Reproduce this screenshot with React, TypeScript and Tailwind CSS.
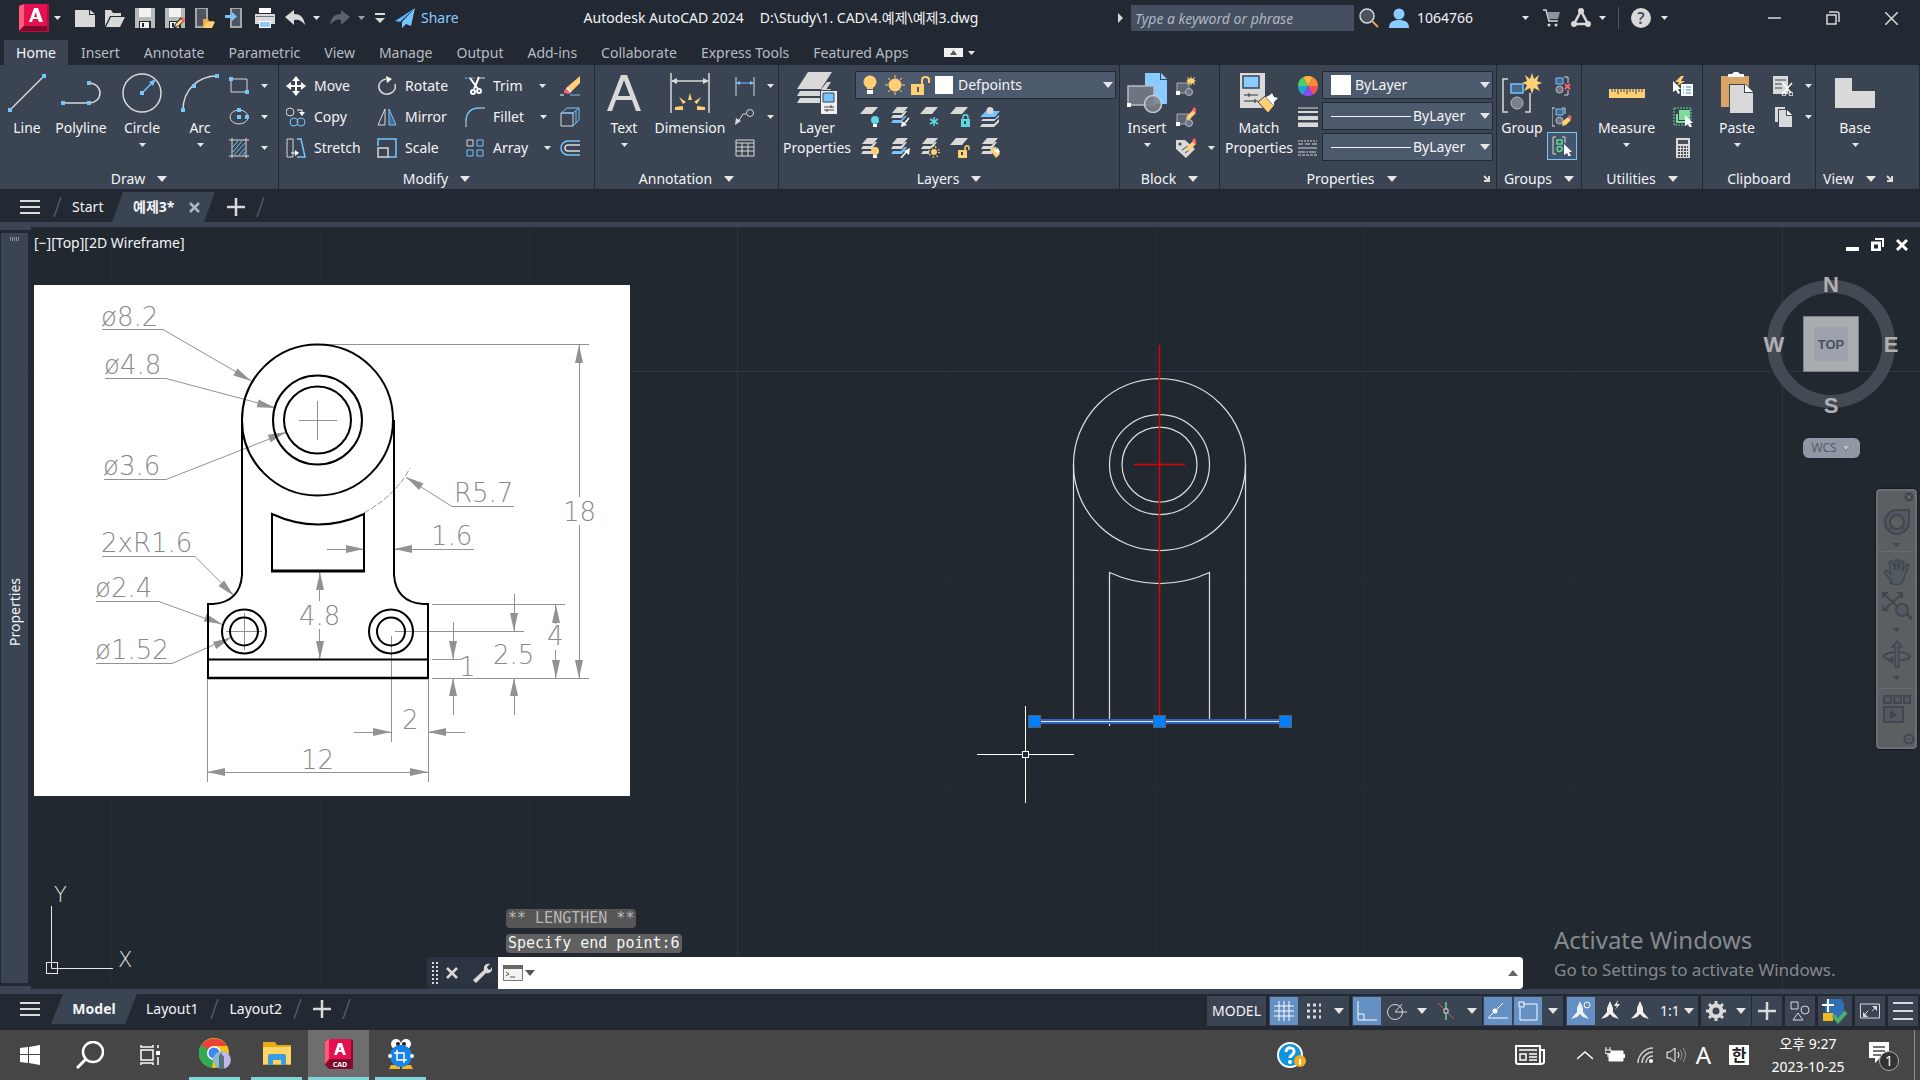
import type { ReactNode } from "react";

const L = "#d9d9d9";
const B = "#75c5ff";
const Y = "#ffd073";
const R = "#ff6369";

function Svg({ w = 20, h = 20, box, children }: { w?: number; h?: number; box?: string; children: ReactNode }) {
  return (
    <svg width={w} height={h} viewBox={box ?? `0 0 ${w} ${h}`} fill="none" className="shrink-0" aria-hidden="true">
      {children}
    </svg>
  );
}

function Caret({ big = false, color = "#e6e6e6" }: { big?: boolean; color?: string }) {
  return big ? (
    <Svg w={10} h={6}><path d="M0 0h10L5 6z" fill={color} /></Svg>
  ) : (
    <Svg w={7} h={4}><path d="M0 0h7L3.500 4z" fill={color} /></Svg>
  );
}

const Dot = ({ x, y, c = B }: { x: number; y: number; c?: string }) => (
  <rect x={x - 2} y={y - 2} width="4" height="4" fill={c} />
);

/* ---------- shared glyph fragments ---------- */

const Sheet = ({ y = 0, c = L }: { y?: number; c?: string }) => (
  <path d={`M6 ${y}h12l-6 7H0z`} fill={c} />
);
const Sheets = ({ mid = L, low = L }: { mid?: string; low?: string }) => (
  <>
    <path d="M7 0h11l-5 6H2z" fill={L} />
    <path d="M15 4h2l-5 7H1l2-3h8z" fill={mid} />
    <path d="M15 9h2l-5 7H1l2-3h8z" fill={low} />
  </>
);
const BulbShape = ({ c }: { c: string }) => (
  <>
    <circle cx="15" cy="13" r="4" fill={c} />
    <path d="M13 17h4v3h-4z" fill="#fff" />
  </>
);
const Pencil = () => (
  <>
    <path d="M11 9l6-6 3 3-6 6-4 1z" fill={Y} />
    <path d="M16 3l2-3 3 3-2 3z" fill={R} />
  </>
);
const Cursor = ({ x = 0, y = 0 }: { x?: number; y?: number }) => (
  <path transform={`translate(${x} ${y})`} d="M0 0v11l3-2 2 4 2-1-2-4h3z" fill="#fff" />
);

/* ---------- title bar icons ---------- */

const NewIcon = () => (
  <Svg><path d="M0 2h14v5h6v12H0z" fill={L} /><path d="M15 2l5 4h-5z" fill={L} /></Svg>
);
const OpenIcon = () => (
  <Svg><path d="M0 18V2h6l2 3h8v3H5z" fill={L} /><path d="M6 9h14l-5 10H1z" fill={L} /></Svg>
);
const SaveIcon = ({ pencil = false }: { pencil?: boolean }) => (
  <Svg>
    <path d="M0 0h20v20H0z" fill="#b8b8b8" />
    <path d="M4 0h12v9H4z" fill="#f2f2f2" />
    <path d="M4 13h12v7H4z" fill="#222933" />
    <path d="M5 14h9v6H5z" fill="#f2f2f2" />
    <path d="M7 15h2v4H7z" fill="#222933" />
    {pencil && <g transform="translate(1 8)"><path d="M9 8l-2 5 5-2 6-6-3-4z" fill="#222933" /><path d="M10 8l-1 3 3-1 5-5-2-2z" fill={Y} /><path d="M15 3l2-2 3 2-2 3z" fill={R} /></g>}
  </Svg>
);
const CloudOpenIcon = () => (
  <Svg>
    <path d="M1 0h11v19H1z" fill="#4d5560" stroke="#a6a6a6" strokeWidth="2" />
    <path d="M8 11h5l1 2h5v3h-8l-2 4H8z" fill="#f5a93b" /><path d="M11 14h9l-3 6H9z" fill={Y} />
  </Svg>
);
const CloudSaveIcon = () => (
  <Svg>
    <path d="M6 0h10v19H6z" fill="#4d5560" stroke="#a6a6a6" strokeWidth="2" />
    <path d="M0 7h7V4l5 4.500-5 4.500v-3H0z" fill={B} />
  </Svg>
);
const PrintIcon = () => (
  <Svg>
    <path d="M4 0h12v5H4z" fill="#fff" /><path d="M0 6h20v10H0z" fill={L} /><path d="M1 8h18v1H1z" fill="#6b7280" /><path d="M4 13h12v7H4z" fill="#fff" /><path d="M5 14h10v5H5z" fill="#8ccbff" />
  </Svg>
);
const UndoIcon = ({ redo = false }: { redo?: boolean }) => (
  <Svg>
    <path transform={redo ? "matrix(-1 0 0 1 20 0)" : undefined} d="M0 9l9-7v4c6 0 10 3 11 11-3-4-6-6-11-5v5z" fill={redo ? "#5d636c" : L} />
  </Svg>
);
const ShareIcon = () => (
  <Svg><path d="M20 0L0 13l5 1z" fill="#5fb5ff" /><path d="M20 0L7 14v6l4-4 5 2z" fill="#75c5ff" /></Svg>
);

/* ---------- ribbon icons ---------- */

const LineIcon = () => (
  <Svg w={40} h={40}><path d="M3 37L37 3" stroke={L} strokeWidth="1.500" /><Dot x={3} y={37} /><Dot x={37} y={3} /></Svg>
);
const PolylineIcon = () => (
  <Svg w={40} h={40}><path d="M2 30h26c6 0 11-4 11-10s-5-10-11-10" stroke={L} strokeWidth="1.500" /><Dot x={2} y={30} /><Dot x={28} y={30} /><Dot x={28} y={10} /></Svg>
);
const CircleIcon = () => (
  <Svg w={40} h={40}>
    <circle cx="20" cy="20" r="19" stroke={L} strokeWidth="1.500" />
    <path d="M20 20L31 9" stroke={B} strokeWidth="1.500" /><path d="M34 6l-7 3 4 4z" fill={B} /><Dot x={20} y={20} />
  </Svg>
);
const ArcIcon = () => (
  <Svg w={40} h={40}><path d="M3 37C3 17 18 3 37 3" stroke={L} strokeWidth="1.500" /><Dot x={3} y={37} /><Dot x={14} y={13} /><Dot x={37} y={3} /></Svg>
);
const RectIcon = () => (
  <Svg><path d="M2 3h16v13H2z" stroke={L} /><Dot x={2} y={3} /><Dot x={18} y={16} /></Svg>
);
const EllipseIcon = () => (
  <Svg><ellipse cx="10" cy="10" rx="9" ry="7" stroke={L} /><Dot x={10} y={3} /><Dot x={10} y={10} /><Dot x={18} y={10} /></Svg>
);
const HatchIcon = () => (
  <Svg><path d="M0 2h20M0 18h20M3 0v20M17 0v20" stroke={L} /><path d="M4 9l5-6M4 14L13 3M5 17L16 5M10 17l6-7M14 17l2-3" stroke={B} /></Svg>
);
const MoveIcon = () => (
  <Svg><path d="M10 1v18M1 10h18" stroke="#fff" strokeWidth="2" /><path d="M10 0l4 5H6zM10 20l4-5H6zM0 10l5-4v8zM20 10l-5-4v8z" fill="#fff" /></Svg>
);
const RotateIcon = () => (
  <Svg><path d="M9 3C4 4 1 8 2 12c1 5 7 8 12 5 4-2 5-5 4-9" stroke={L} strokeWidth="1.500" /><path d="M9 0l6 3-5 4z" fill="#fff" /></Svg>
);
const TrimIcon = () => (
  <Svg>
    <path d="M0 2h10" stroke={B} strokeDasharray="2 1" /><path d="M12 2h8" stroke={L} />
    <path d="M5 2l8 11M14 1L9 13" stroke="#fff" strokeWidth="2" />
    <circle cx="8" cy="16" r="2" stroke="#fff" strokeWidth="2" /><circle cx="14" cy="15" r="2" stroke="#fff" strokeWidth="2" />
  </Svg>
);
const EraserIcon = () => (
  <Svg><path d="M20 0v7l-9 9-5-4z" fill={Y} /><path d="M7 11l5 4-3 3-5-1v-2z" fill={R} /><path d="M7 12l4 4" stroke="#fff" strokeWidth="2" /><path d="M0 19h4" stroke="#fff" /><path d="M10 19h10" stroke={B} /></Svg>
);
const CopyIcon = () => (
  <Svg>
    <circle cx="4" cy="5" r="4" stroke={L} /><circle cx="8" cy="15" r="4" stroke={B} /><circle cx="15" cy="15" r="4" stroke={B} />
    <path d="M11 3h5v3" stroke="#fff" /><path d="M13 5h6l-3 4z" fill="#fff" />
  </Svg>
);
const MirrorIcon = () => (
  <Svg><path d="M8 2v16H1z" stroke={L} /><path d="M12 2v16h7z" stroke={B} fill="#47688a" /></Svg>
);
const FilletIcon = () => (
  <Svg><path d="M1 20v-6" stroke={L} /><path d="M14 1h6" stroke={L} /><path d="M1 14C1 6 6 1 14 1" stroke={B} strokeWidth="1.500" /></Svg>
);
const BoxIcon = () => (
  <Svg><path d="M1 6h12v13H1z" stroke={L} /><path d="M1 6l6-5h12l-6 5zM19 1v12l-6 6M16 4v12" stroke={B} /></Svg>
);
const StretchIcon = () => (
  <Svg><path d="M1 1h6v18H1z" stroke={L} /><path d="M11 1h4l4 18h-8" stroke={B} strokeWidth="1.500" /><path d="M5 15h5" stroke="#fff" /><path d="M9 12l4 3-4 3z" fill="#fff" /></Svg>
);
const ScaleIcon = () => (
  <Svg><path d="M1 8V1h18v18h-8" stroke={B} strokeWidth="1.500" /><path d="M1 10h10v9H1z" stroke={L} strokeWidth="1.500" /></Svg>
);
const ArrayIcon = () => (
  <Svg><path d="M2 2h6v6H2z" stroke={L} /><path d="M12 2h6v6h-6zM2 12h6v6H2zM12 12h6v6h-6z" stroke={B} /></Svg>
);
const OffsetIcon = () => (
  <Svg><path d="M20 7H8a3 3 0 0 0 0 6h12" stroke={L} strokeWidth="1.500" /><path d="M20 3H8a7 7 0 0 0 0 14h12" stroke={B} strokeWidth="1.500" /></Svg>
);
const TextIcon = () => (
  <Svg w={40} h={40}><path d="M17 2h6l14 36h-5l-4-11H12L8 38H3zm3 5l-6 16h12z" fill={L} /></Svg>
);
const DimensionIcon = () => (
  <Svg w={40} h={40}>
    <path d="M1 0v40M39 0v40" stroke={L} strokeWidth="1.500" /><path d="M2 8h36" stroke={L} strokeWidth="1.500" />
    <path d="M1 8l6-3v6zM39 8l-6-3v6z" fill={L} />
    <path d="M20 20l2 7h-4zM9 24l7 5-3 2zM31 24l-7 5 3 2zM5 34l8-1v4l-8 0zM35 34l-8-1v4h8z" fill={Y} />
  </Svg>
);
const LinearIcon = () => (
  <Svg><path d="M1 1v19M19 1v19" stroke={L} /><path d="M2 7h16" stroke={B} /><path d="M1 7l4-2v4zM19 7l-4-2v4z" fill={B} /></Svg>
);
const LeaderIcon = () => (
  <Svg><circle cx="15" cy="6" r="3.500" stroke={L} /><path d="M11 7H8l-5 8" stroke={L} /><path d="M0 18l1-7 5 3z" fill={L} /></Svg>
);
const TableIcon = () => (
  <Svg><path d="M1 2h18v16H1z" stroke={L} /><path d="M1 5h18M1 9h18M1 13h18M7 5v13M13 5v13" stroke={L} /></Svg>
);
const LayerPropsIcon = () => (
  <Svg w={40} h={42}>
    <path d="M11 0h24l-11 17H0z" fill={L} /><path d="M30 10h4l-9 14H0l3-5h20zM30 17h4l-9 14H0l3-5h20z" fill={L} />
    <path d="M23 18h17v24H23z" fill="#3b4453" /><path d="M24 19h16v23H24z" fill="#f0f0f0" /><path d="M26 21h11v9H26z" fill={B} stroke="#3b4453" /><path d="M27 35h10M27 38h10M34 33v3M30 37v3" stroke="#444" />
  </Svg>
);
const BulbIcon = () => (
  <Svg><circle cx="10" cy="7" r="6.500" fill={Y} /><path d="M7 12h6v2H7z" fill={Y} /><path d="M7 15h6v4H7z" fill="#fff" /></Svg>
);
const SunIcon = () => (
  <Svg><circle cx="10" cy="10" r="6.500" fill={Y} /><path d="M10 0v3M10 17v3M0 10h3M17 10h3M3 3l2 2M15 15l2 2M3 17l2-2M15 5l2-2" stroke={Y} /></Svg>
);
const UnlockIcon = () => (
  <Svg><path d="M1 9h13v11H1z" fill={Y} /><path d="M12 9V5c0-4 7-4 7 0v3" stroke={Y} strokeWidth="2" /><path d="M8 12v5" stroke="#4d5a6e" strokeWidth="2" /></Svg>
);
const LayerTools: ReactNode[] = [
  <Svg key="off"><Sheet /><BulbShape c="#5fd9e0" /></Svg>,
  <Svg key="iso"><Sheets low={B} /><path d="M11 20l1-6 5-5 2 3-4 4z" fill="#3b4453" /><path d="M19 11l-5 6" stroke="#fff" strokeWidth="1.500" /><path d="M11 20l1-6 5 4z" fill="#fff" /></Svg>,
  <Svg key="frz"><Sheet /><path d="M14 10v9M10 12l8 5M18 12l-8 5" stroke="#5fd9e0" strokeWidth="1.500" /></Svg>,
  <Svg key="lock"><Sheet /><path d="M11 12h9v8h-9z" fill="#5fd9e0" /><path d="M13 12v-2c0-3 5-3 5 0v2" stroke="#5fd9e0" strokeWidth="1.500" /><path d="M15 14v3" stroke="#3b4453" strokeWidth="2" /></Svg>,
  <Svg key="cur"><path d="M6 4h14l-5 6H0z" fill={B} /><path d="M3 12h12l4-4v2l-5 4H1zM2 17h12l5-5v3l-5 5H0z" fill={L} /><circle cx="10" cy="3.500" r="3.500" fill={L} /></Svg>,
  <Svg key="on"><Sheets /><BulbShape c={Y} /></Svg>,
  <Svg key="uniso"><Sheets low={B} /><path d="M11 20l6-7" stroke="#fff" strokeWidth="1.500" /><path d="M20 10l-1 7-5-4z" fill="#fff" /></Svg>,
  <Svg key="thaw"><Sheets /><circle cx="14" cy="14" r="5" fill="#3b4453" /><circle cx="14" cy="14" r="3" fill={Y} /><circle cx="14" cy="14" r="5" stroke={Y} strokeWidth="2" strokeDasharray="1 3" /></Svg>,
  <Svg key="unlk"><Sheet /><path d="M8 12h9v8H8z" fill={Y} /><path d="M15 12v-2c0-3 4-3 4 0v2" stroke={Y} strokeWidth="1.500" /><path d="M12 14v3" stroke="#3b4453" strokeWidth="2" /></Svg>,
  <Svg key="mat"><Sheets /><path d="M10 12l4-3 6 7-4 4z" fill={Y} /><path d="M14 12l4-2 2 4-2 2z" fill="#fff" /></Svg>,
];
const InsertIcon = () => (
  <Svg w={40} h={40}>
    <path d="M18 0h15v7h7v24H18z" fill="#8accff" /><path d="M34 0l6 6h-6z" fill="#8accff" />
    <path d="M1 13h26v19H1z" fill="#6d7583" stroke="#b8bcc2" strokeWidth="1.500" /><circle cx="26" cy="31" r="8.500" fill="#7b818c" fillOpacity=".85" stroke="#c8cbd0" strokeWidth="1.500" /><Dot x={2} y={32} c="#fff" />
  </Svg>
);
const BlockBase = () => (
  <><path d="M1 7h12v10H1z" fill="#5e6674" stroke="#a6abb3" /><circle cx="13" cy="16" r="3.500" fill="#6d7583" stroke="#b8bcc2" /><Dot x={2} y={17} c="#fff" /></>
);
const CreateBlockIcon = () => (
  <Svg><BlockBase /><path d="M15 0l1 3 3-2-1 3 2 1-2 1 1 3-3-2-1 3-1-3-3 2 1-3-2-1 2-1-1-3 3 2z" fill={Y} /></Svg>
);
const EditBlockIcon = () => <Svg><BlockBase /><Pencil /></Svg>;
const TagIcon = () => (
  <Svg><path d="M0 2h9l10 9-9 9L0 11z" fill={L} /><circle cx="4" cy="6" r="1.500" fill="#3b4453" /><path d="M6 12l6-4M9 15l4-3" stroke="#3b4453" /><Pencil /></Svg>
);
const MatchIcon = () => (
  <Svg w={40} h={40}>
    <path d="M1 0h25v35H1z" fill={L} /><path d="M4 3h16v12H4z" fill="#8accff" stroke="#3b4453" strokeWidth="1.500" />
    <path d="M5 22h14M5 28h14M10 20v4M16 26v4" stroke="#333" />
    <path d="M19 29l7-6 9 10-6 7z" fill={Y} stroke="#3b4453" /><path d="M27 24l4-2 2-2 2 4 4 1-4 4v4z" fill="#fff" />
  </Svg>
);
const WheelIcon = () => (
  <Svg>
    {["#ffb13c", "#f98a3c", "#ea5455", "#8a4bf2", "#22a5c8", "#4dcf6a"].map((c, i) => (
      <path key={c} d="M10 10L5 1.340A10 10 0 0 1 15 1.340z" fill={c} transform={`rotate(${i * 60} 10 10)`} />
    ))}
  </Svg>
);
const WeightIcon = () => (
  <Svg><path d="M0 1h20" stroke={L} /><path d="M0 5h20" stroke={L} strokeWidth="2" /><path d="M0 11h20" stroke={L} strokeWidth="4" /><path d="M0 18h20" stroke={L} strokeWidth="5" /></Svg>
);
const LinetypeIcon = () => (
  <Svg><path d="M0 3h19" stroke={L} strokeDasharray="2 1" /><path d="M0 6h19" stroke={L} strokeDasharray="5 2" /><path d="M0 10h19" stroke={L} /><path d="M0 14h19" stroke={L} strokeDasharray="7 1 2 1" /><path d="M0 17h19" stroke={L} strokeDasharray="3 1" /></Svg>
);
const GroupIcon = () => (
  <Svg w={40} h={40}>
    <path d="M6 6H1v33h5M23 39h5V20" stroke={L} strokeWidth="1.500" />
    <path d="M9 11h12v9H9z" fill="#47688a" stroke={B} strokeWidth="1.500" /><circle cx="15" cy="30" r="6" fill="#7b818c" stroke="#b8bcc2" />
    <path d="M30 0l2 6 5-4-2 6 5 2-5 2 3 6-6-3-2 6-2-6-6 3 3-6-5-2 5-2-2-6 5 4z" fill={Y} />
  </Svg>
);
const GroupMini = ({ c = B }: { c?: string }) => (
  <><path d="M4 2h7v6H4z" fill="#47688a" stroke={c} /><circle cx="7.500" cy="13.500" r="3.500" fill="#6d7583" stroke="#b8bcc2" /></>
);
const UngroupIcon = () => (
  <Svg><GroupMini /><path d="M12 1h4v6M12 19h4v-5" stroke={L} /><path d="M13 8l5 5M18 8l-5 5" stroke={R} strokeWidth="2" /></Svg>
);
const GroupEditIcon = () => (
  <Svg><path d="M3 1H0v18h3M10 1h3v6" stroke={L} /><GroupMini /><path d="M10 19l1-5 5-4 3 3-5 5z" fill={Y} /><path d="M16 9l2-1 2 3-2 1z" fill={R} /></Svg>
);
const GroupSelIcon = () => (
  <Svg><path d="M4 1H1v17h3M10 1h3v6" stroke={L} /><path d="M5 4h5v4H5z" stroke="#5fd98c" strokeWidth="1.500" /><circle cx="7.500" cy="13" r="2.500" stroke="#5fd98c" strokeWidth="1.500" /><Cursor x={12} y={8} /></Svg>
);
const RulerIcon = () => (
  <Svg w={40} h={40}><path d="M2 16h36v9H2z" fill={Y} /><path d="M5 16v3M8 16v3M11 16v5M14 16v3M17 16v3M20 16v5M23 16v3M26 16v3M29 16v5M32 16v3M35 16v3" stroke="#3b4453" /></Svg>
);
const QuickSelIcon = () => (
  <Svg><path d="M8 0L2 6h4l-2 4 8-5H8l3-5z" fill={Y} /><Cursor x={0} y={5} /><path d="M8 8h12v12H8z" fill="#fff" /><path d="M10 11h1M10 14h1M10 17h1M13 11h5M13 14h5M13 17h5" stroke="#2f86e0" /></Svg>
);
const SelectAllIcon = () => (
  <Svg><path d="M1 1h17v17H1z" stroke="#5fd98c" strokeDasharray="2 1" /><path d="M6 3h11v10H6z" fill="#7fdc9d" /><path d="M3 7h2v7h8v2H3z" fill="#7fdc9d" /><Cursor x={12} y={8} /></Svg>
);
const CalcIcon = () => (
  <Svg><path d="M3 0h14v20H3z" fill={L} /><path d="M5 2h10v4H5z" fill="#4b4f57" /><path d="M5 9h10M5 12h10M5 15h10M5 18h10" stroke="#4b4f57" strokeWidth="2" strokeDasharray="2 1" /></Svg>
);
const PasteIcon = () => (
  <Svg w={40} h={42}>
    <path d="M4 4h28v31H4z" fill="#d9a566" /><path d="M11 5V2h4l2-2h4l2 2h4v3z" fill="#fff" />
    <path d="M12 12h17l8 8v22H12z" fill="#3b4453" /><path d="M13 13h14v8h9v20H13z" fill={L} /><path d="M28 12l8 8h-8z" fill="#fff" />
  </Svg>
);
const CutIcon = () => (
  <Svg><path d="M0 0h15v18H0z" fill={L} /><path d="M2 4h11M2 8h7M2 12h7" stroke="#3b4453" /><path d="M9 6l9 11M19 7l-9 10" stroke="#fff" strokeWidth="1.500" /><circle cx="11" cy="18" r="2" stroke="#fff" /><circle cx="18" cy="18" r="2" stroke="#fff" /></Svg>
);
const CopyClipIcon = () => (
  <Svg><path d="M2 0h10v2H5v13H2z" fill={L} /><path d="M6 3h7v6h6v11H6z" fill={L} /><path d="M14 3l5 5h-5z" fill="#fff" /></Svg>
);
const BaseIcon = () => <Svg w={40} h={40}><path d="M0 5h17v13h23v17H0z" fill={L} /></Svg>;

/* ---------- ribbon building blocks ---------- */

function Big({ icon, label, second, caret, w }: { icon: ReactNode; label: string; second?: string; caret?: boolean; w: string }) {
  return (
    <button className={`flex flex-col items-center gap-[5px] pt-2 ${w}`}>
      <span className="flex h-10 items-center">{icon}</span>
      <span className="text-sm leading-5 whitespace-nowrap">{label}{second && <><br />{second}</>}</span>
      {caret && <Caret />}
    </button>
  );
}

function Panel({ title, children, caret = true, launcher, start }: { title: string; children: ReactNode; caret?: boolean; launcher?: boolean; start?: boolean }) {
  return (
    <section className="flex min-w-0 flex-col border-r border-[#232a33]" aria-label={title}>
      <div className="flex flex-1">{children}</div>
      <div className={`flex h-[21px] items-center ${start ? "gap-[10px] pl-[7px]" : ""}`}>
        <button className={`flex items-center justify-center gap-3 text-sm leading-5 ${start ? "" : "flex-1"}`}>
          {title}{caret && <Caret big />}
        </button>
        {launcher && (
          <button aria-label={`${title} settings`} className="mr-[6px]">
            <Svg w={7} h={7}><path d="M1 1l4 4M6 1v5H1" stroke={L} strokeWidth="2" /></Svg>
          </button>
        )}
      </div>
    </section>
  );
}

function Tool({ icon, label, caret, name }: { icon: ReactNode; label?: string; caret?: boolean; name?: string }) {
  return (
    <span className="flex h-[31px] items-center">
      <button className="flex items-center gap-2" aria-label={label ? undefined : name}>
        {icon}{label && <span className="text-sm leading-5">{label}</span>}
      </button>
      {caret && <button className={label ? "px-4" : "pl-3"} aria-label={`${label ?? name} options`}><Caret /></button>}
    </span>
  );
}

function Combo({ before, value, label }: { before: ReactNode; value: string; label: string }) {
  return (
    <div className="flex h-7 items-center border border-[#232a33] bg-[#4d5a6e] pr-[2px]">
      {before}
      <select aria-label={label} className="h-[26px] min-w-0 flex-1 appearance-none bg-transparent text-sm leading-5 text-gray-100 outline-none">
        <option>{value}</option>
      </select>
      <Caret big />
    </div>
  );
}

function Ribbon() {
  return (
    <div className="grid h-[124px] grid-cols-[279fr_316fr_184fr_341fr_100fr_277fr_85fr_121fr_113fr_104fr] bg-[#3b4453]">
      <Panel title="Draw">
        <Big w="w-[54px]" icon={<LineIcon />} label="Line" />
        <Big w="w-[54px]" icon={<PolylineIcon />} label="Polyline" />
        <Big w="w-[68px]" icon={<CircleIcon />} label="Circle" caret />
        <Big w="w-[48px]" icon={<ArcIcon />} label="Arc" caret />
        <div className="pt-[5px] pl-[5px]">
          <Tool icon={<RectIcon />} name="Rectangle" caret />
          <Tool icon={<EllipseIcon />} name="Ellipse" caret />
          <Tool icon={<HatchIcon />} name="Hatch" caret />
        </div>
      </Panel>
      <Panel title="Modify">
        <div className="grid grid-cols-[91px_88px_95px_20px] content-start pt-[5px] pl-[7px]">
          <Tool icon={<MoveIcon />} label="Move" />
          <Tool icon={<RotateIcon />} label="Rotate" />
          <Tool icon={<TrimIcon />} label="Trim" caret />
          <Tool icon={<EraserIcon />} name="Erase" />
          <Tool icon={<CopyIcon />} label="Copy" />
          <Tool icon={<MirrorIcon />} label="Mirror" />
          <Tool icon={<FilletIcon />} label="Fillet" caret />
          <Tool icon={<BoxIcon />} name="Explode" />
          <Tool icon={<StretchIcon />} label="Stretch" />
          <Tool icon={<ScaleIcon />} label="Scale" />
          <Tool icon={<ArrayIcon />} label="Array" caret />
          <Tool icon={<OffsetIcon />} name="Offset" />
        </div>
      </Panel>
      <Panel title="Annotation">
        <Big w="w-[58px]" icon={<TextIcon />} label="Text" caret />
        <Big w="w-[74px]" icon={<DimensionIcon />} label="Dimension" />
        <div className="pt-[5px] pl-2">
          <Tool icon={<LinearIcon />} name="Linear" caret />
          <Tool icon={<LeaderIcon />} name="Leader" caret />
          <Tool icon={<TableIcon />} name="Table" />
        </div>
      </Panel>
      <Panel title="Layers">
        <Big w="w-[76px]" icon={<LayerPropsIcon />} label="Layer" second="Properties" />
        <div className="flex-1 pt-[6px] pr-[3px]">
          <Combo
            label="Layer"
            value="Defpoints"
            before={<span className="flex items-center gap-[5px] pr-[5px] pl-1"><BulbIcon /><SunIcon /><UnlockIcon /><span className="h-[18px] w-[18px] bg-white" /></span>}
          />
          <div className="grid w-[155px] grid-cols-5 pt-[2px] pl-[5px]">
            {LayerTools.map((icon, i) => (
              <button key={i} aria-label={`Layer tool ${i + 1}`} className="flex h-[31px] items-center">{icon}</button>
            ))}
          </div>
        </div>
      </Panel>
      <Panel title="Block">
        <Big w="w-[54px]" icon={<InsertIcon />} label="Insert" caret />
        <div className="pt-[5px] pl-[2px]">
          <Tool icon={<CreateBlockIcon />} name="Create block" />
          <Tool icon={<EditBlockIcon />} name="Edit block" />
          <Tool icon={<TagIcon />} name="Edit attributes" caret />
        </div>
      </Panel>
      <Panel title="Properties" launcher>
        <Big w="w-[78px]" icon={<MatchIcon />} label="Match" second="Properties" />
        <div className="pt-[5px]">
          <Tool icon={<WheelIcon />} name="Color" />
          <Tool icon={<WeightIcon />} name="Lineweight" />
          <Tool icon={<LinetypeIcon />} name="Linetype" />
        </div>
        <div className="flex flex-1 flex-col gap-[3px] pt-[6px] pr-[3px] pl-1">
          <Combo label="Object color" value="ByLayer" before={<span className="mr-1 ml-2 h-5 w-5 bg-white" />} />
          <Combo label="Line weight" value="ByLayer" before={<span className="mr-[2px] ml-2 h-px w-20 bg-gray-100" />} />
          <Combo label="Line type" value="ByLayer" before={<span className="mr-[2px] ml-2 h-px w-20 bg-gray-100" />} />
        </div>
      </Panel>
      <Panel title="Groups">
        <Big w="w-[50px]" icon={<GroupIcon />} label="Group" />
        <div className="flex flex-col items-center pt-[5px]">
          <Tool icon={<UngroupIcon />} name="Ungroup" />
          <Tool icon={<GroupEditIcon />} name="Group edit" />
          <button aria-label="Group selection" className="flex h-7 w-[30px] items-center justify-center border border-[#75c5ff] bg-[#44546b]"><GroupSelIcon /></button>
        </div>
      </Panel>
      <Panel title="Utilities">
        <Big w="w-[89px]" icon={<RulerIcon />} label="Measure" caret />
        <div className="pt-[5px] pl-[2px]">
          <Tool icon={<QuickSelIcon />} name="Quick select" />
          <Tool icon={<SelectAllIcon />} name="Select all" />
          <Tool icon={<CalcIcon />} name="Calculator" />
        </div>
      </Panel>
      <Panel title="Clipboard" caret={false}>
        <Big w="w-[68px]" icon={<PasteIcon />} label="Paste" caret />
        <div className="pt-[5px] pl-[2px]">
          <Tool icon={<CutIcon />} name="Cut" caret />
          <Tool icon={<CopyClipIcon />} name="Copy to clipboard" caret />
        </div>
      </Panel>
      <Panel title="View" launcher start>
        <Big w="w-[78px]" icon={<BaseIcon />} label="Base" caret />
      </Panel>
    </div>
  );
}

/* ---------- title bar ---------- */

function IconButton({ name, children, cls = "" }: { name: string; children: ReactNode; cls?: string }) {
  return <button aria-label={name} className={`flex shrink-0 items-center justify-center ${cls}`}>{children}</button>;
}

function TitleBar() {
  return (
    <header className="flex h-10 items-center pb-1">
      <IconButton name="Application menu" cls="ml-[19px] gap-[5px]">
        <Svg w={30} h={28}>
          <path d="M0 2l5-2h25v28H2l-2-2z" fill="#ba0c3f" /><path d="M5 0h23v22H5z" fill="#e51050" /><path d="M0 2l5-2v22l-5 5z" fill="#ff5c7a" /><path d="M0 27l5-5h23v5z" fill="#7d0a2c" />
          <path d="M15 4h4l5 14h-4l-1-3h-5l-1 3h-3zm2 4l-2 5h3z" fill="#fff" />
        </Svg>
        <Caret />
      </IconButton>
      <nav className="ml-[14px] flex items-center gap-[10px]" aria-label="Quick access">
        <IconButton name="New"><NewIcon /></IconButton>
        <IconButton name="Open"><OpenIcon /></IconButton>
        <IconButton name="Save"><SaveIcon /></IconButton>
        <IconButton name="Save as"><SaveIcon pencil /></IconButton>
        <IconButton name="Open from web"><CloudOpenIcon /></IconButton>
        <IconButton name="Save to web"><CloudSaveIcon /></IconButton>
        <IconButton name="Plot"><PrintIcon /></IconButton>
        <IconButton name="Undo" cls="gap-2"><UndoIcon /><Caret /></IconButton>
        <IconButton name="Redo" cls="gap-2"><UndoIcon redo /><Caret color="#9aa0a8" /></IconButton>
        <IconButton name="Customize toolbar"><Svg w={10} h={10}><path d="M0 1h10" stroke={L} strokeWidth="2" /><path d="M0 5h10L5 10z" fill={L} /></Svg></IconButton>
        <button className="flex items-center gap-[6px] text-sm text-[#8accff]"><ShareIcon />Share</button>
      </nav>
      <h1 className="flex flex-1 justify-start gap-4 pl-[125px] text-sm whitespace-nowrap text-gray-100">
        <span>Autodesk AutoCAD 2024</span><span>D:\Study\1. CAD\4.예제\예제3.dwg</span>
      </h1>
      <div className="flex w-[802px] shrink-0 items-center">
        <Svg w={5} h={10}><path d="M0 0l5 5-5 5z" fill={L} /></Svg>
        <input aria-label="Search" placeholder="Type a keyword or phrase" className="ml-2 h-[26px] w-[223px] bg-[#454f61] px-1 text-sm italic text-gray-100 outline-none placeholder:text-[#b0b6c0]" />
        <IconButton name="Find" cls="ml-[5px]"><Svg><circle cx="8" cy="8" r="7" fill="#4b5260" stroke={L} strokeWidth="1.500" /><path d="M13 13l6 6" stroke="#d9a566" strokeWidth="2" /></Svg></IconButton>
        <button className="ml-[10px] flex items-center gap-2 text-sm text-gray-100">
          <Svg><circle cx="10" cy="6" r="5.500" fill="#8accff" /><path d="M0 20c0-6 4-8 10-8s10 2 10 8z" fill="#8accff" /></Svg>1064766
        </button>
        <IconButton name="Account options" cls="ml-[49px]"><Caret /></IconButton>
        <IconButton name="Cart" cls="ml-[14px]"><Svg w={18} h={18}><path d="M0 1h3l3 11h9" stroke={L} strokeWidth="1.500" /><path d="M4 3h13l-2 7H6z" fill="#8e949c" /><circle cx="6" cy="16" r="1.500" fill={L} /><circle cx="13" cy="16" r="1.500" fill={L} /></Svg></IconButton>
        <IconButton name="Autodesk apps" cls="ml-[10px] gap-2"><Svg><path d="M10 3L3 16h14z" stroke={L} strokeWidth="2.500" /><circle cx="10" cy="3" r="3" fill={L} /><circle cx="3" cy="16" r="3" fill={L} /><circle cx="17" cy="16" r="3" fill={L} /></Svg><Caret /></IconButton>
        <span className="ml-3 h-[22px] w-px bg-[#4d5a6e]" />
        <button aria-label="Help" className="ml-3 flex items-center gap-[10px]"><span className="flex h-5 w-5 items-center justify-center rounded-full bg-[#d9d9d9] text-base leading-5 font-semibold text-[#4b5260]">?</span><Caret /></button>
        <span className="flex flex-1 items-center justify-end gap-[45px] pr-[22px]">
          <IconButton name="Minimize"><Svg w={13} h={13}><path d="M0 6h13" stroke={L} strokeWidth="1.500" /></Svg></IconButton>
          <IconButton name="Restore"><Svg w={14} h={14}><path d="M1 4h9v9H1z" stroke={L} strokeWidth="1.500" /><path d="M3 1h8q2 0 2 2v8" stroke={L} strokeWidth="1.500" /></Svg></IconButton>
          <IconButton name="Close"><Svg w={13} h={13}><path d="M0 0l13 13M13 0L0 13" stroke={L} strokeWidth="1.500" /></Svg></IconButton>
        </span>
      </div>
    </header>
  );
}

const tabs = ["Insert", "Annotate", "Parametric", "View", "Manage", "Output", "Add-ins", "Collaborate", "Express Tools", "Featured Apps"];

function RibbonTabs() {
  return (
    <nav className="flex h-[25px] items-center pl-1 text-sm text-[#b8bcc2]" aria-label="Ribbon tabs">
      <button className="h-[25px] w-16 bg-[#3b4453] text-gray-100">Home</button>
      <div className="ml-[13px] flex gap-6 whitespace-nowrap">
        {tabs.map((t) => <button key={t}>{t}</button>)}
        <button aria-label="Minimize ribbon" className="ml-3 flex items-center gap-[5px]">
          <Svg w={19} h={9}><path d="M0 0h19v9H0z" fill="#f0f0f0" /><path d="M6 7h7L9.500 2z" fill="#555" /></Svg><Caret />
        </button>
      </div>
    </nav>
  );
}

/* ---------- tab strips ---------- */

const MenuIcon = () => <Svg w={20} h={16}><path d="M0 2h20M0 8h20M0 14h20" stroke={L} strokeWidth="2" /></Svg>;
const Slash = () => <Svg w={9} h={20}><path d="M1 20L8 0" stroke="#4d5a6e" strokeWidth="1.500" /></Svg>;
const PlusIcon = () => <Svg w={18} h={18}><path d="M9 0v18M0 9h18" stroke={L} strokeWidth="2.500" /></Svg>;

function FileTabs() {
  return (
    <nav className="flex h-[33px] items-end bg-[#222933] pl-5 text-sm text-gray-100" aria-label="Drawing tabs">
      <span className="flex h-[30px] w-[92px] items-center">
        <button aria-label="Drawing list"><MenuIcon /></button>
        <span className="ml-[13px] flex"><Slash /></span>
        <button className="ml-[10px]">Start</button>
      </span>
      <span className="flex h-[30px] w-[103px] items-center justify-between bg-[#3b4453] pr-[15px] pl-[21px] font-bold [clip-path:polygon(11px_0,100%_0,92px_100%,0_100%)]">
        <button className="whitespace-nowrap">예제3*</button>
        <button aria-label="Close tab"><Svg w={11} h={11}><path d="M1 1l9 9M10 1l-9 9" stroke="#b0b6c0" strokeWidth="2.500" /></Svg></button>
      </span>
      <span className="flex h-[30px] items-center gap-[11px] pl-3"><button aria-label="New tab"><PlusIcon /></button><Slash /></span>
    </nav>
  );
}

/* ---------- drawing area ---------- */

const G = "#929292";
function Arrow({ x, y, a }: { x: number; y: number; a: number }) {
  return <path d="M0 0l-18-4v8z" fill={G} transform={`translate(${x} ${y}) rotate(${a})`} />;
}

const notes: [string, number, number][] = [
  ["ø8.2", 101, 326], ["ø4.8", 104, 374], ["ø3.6", 103, 475], ["2xR1.6", 101, 552], ["ø2.4", 95, 597], ["ø1.52", 95, 659],
  ["R5.7", 454, 502], ["1.6", 431, 545], ["18", 563, 521], ["4.8", 299, 625], ["4", 547, 645], ["2.5", 493, 664], ["1", 459, 676], ["2", 402, 729], ["12", 301, 769],
];

function ReferencePart() {
  return (
    <svg className="absolute top-[58px] left-[3px] bg-white" width="596" height="511" viewBox="34 285 596 511" fill="none" role="img" aria-label="Bracket drawing with dimensions">
      <g stroke={G}>
        <path d="M102 329.500h61l88 51M105 378.500h61l109 29M104 479.500h62l120-47M102 556.500h93l39 39M96 601.500h63l63 23M96 663.500h76l58-26M514 506.500h-62l-46-29" />
        <path d="M364 513q32-18 46-45" strokeDasharray="6 2" />
        <path d="M327 549.500h37M394 549.500h80M318 344.500h271M432 678.500h157M579.500 345v152M579.500 525v153" />
        <path d="M319.500 571v30M319.500 629v30M555.500 604v20M555.500 650v28M432 604.500h133M395 631.500h129M514.500 594v37M514.500 678v37M453.500 622v38M453.500 678v37M432 659.500h30" />
        <path d="M354 732.500h37M428 732.500h37M391.500 636v106M428.500 680v102M207.500 680v102M207 772.500h221" />
        <path d="M299 420.500h38M317.500 401v39M226 631.500h36M244.500 613v37" />
      </g>
      <Arrow x={251} y={381} a={30} /><Arrow x={275} y={408} a={15} /><Arrow x={286} y={432} a={-21} /><Arrow x={234} y={596} a={45} />
      <Arrow x={222} y={624} a={20} /><Arrow x={231} y={638} a={-24} /><Arrow x={406} y={477} a={212} />
      <Arrow x={364} y={549} a={0} /><Arrow x={394} y={549} a={180} /><Arrow x={579} y={345} a={-90} /><Arrow x={579} y={678} a={90} />
      <Arrow x={320} y={572} a={-90} /><Arrow x={320} y={659} a={90} /><Arrow x={556} y={605} a={-90} /><Arrow x={556} y={678} a={90} />
      <Arrow x={514} y={631} a={90} /><Arrow x={514} y={678} a={-90} /><Arrow x={453} y={659} a={90} /><Arrow x={453} y={678} a={-90} />
      <Arrow x={391} y={732} a={0} /><Arrow x={428} y={732} a={180} /><Arrow x={207} y={772} a={180} /><Arrow x={428} y={772} a={0} />
      <g stroke="#000" strokeWidth="2">
        <circle cx="317.500" cy="420" r="75.500" /><circle cx="317.500" cy="420" r="44.500" /><circle cx="317.500" cy="420" r="33.500" />
        <path d="M242 420v155q-2 27-29 29h-5v74h220v-74h-5q-27-2-29-29V420" />
        <path d="M208 659.500h220M272 571V514q46 21 92 0v57" />
        <path d="M271 571h94" strokeWidth="3" /><path d="M207 678h222" strokeWidth="2.500" />
        <circle cx="244" cy="631.500" r="22" /><circle cx="244" cy="631.500" r="14" /><circle cx="391" cy="631.500" r="22" /><circle cx="391" cy="631.500" r="14" />
      </g>
      <g fill="#8a8a8a" fontFamily="'DejaVu Sans', sans-serif" fontWeight="200" fontSize="26">
        {notes.map(([t, x, y]) => <text key={t} x={x} y={y}>{t}</text>)}
      </g>
    </svg>
  );
}

function ModelSpace() {
  return (
    <svg className="absolute inset-0 h-full w-full" fill="none" role="img" aria-label="Model space">
      <g transform="translate(-31 -227)">
        <path d="M111.500 227v762M320.500 227v762M529.500 227v762M946.500 227v762M1155.500 227v762M1364.500 227v762M1573.500 227v762M31 580.500h1889M31 789.500h1889" stroke="#262d39" />
        <path d="M737.500 227v762M1782.500 227v762M31 371.500h1889" stroke="#2d3546" />
        <g stroke="#dcdcdc" strokeWidth="1.250">
          <circle cx="1159.500" cy="464.500" r="86" /><circle cx="1159.500" cy="464.500" r="50" /><circle cx="1159.500" cy="464.500" r="37.500" />
          <path d="M1073.500 464v258M1245.500 464v257M1109.500 726V572.500A119 119 0 0 0 1209.500 572.500V720" />
        </g>
        <path d="M1159.500 345v377M1134 464.500h51" stroke="#e00000" strokeWidth="1.500" />
        <path d="M1034 721.500h251" stroke="#3564c0" strokeWidth="5" /><path d="M1034 721.500h251" stroke="#dfe8ff" />
        {[1034, 1159, 1285].map((x) => <rect key={x} x={x - 5.500} y={715.500} width="12" height="12" fill="#0080ff" stroke="#5b6068" />)}
        <path d="M977 754.500h45M1029 754.500h45M1025.500 706v45M1025.500 758v45" stroke="#fff" /><rect x="1022.500" y="751.500" width="6" height="6" stroke="#fff" />
        <path d="M51.500 906v62.500H113" stroke="#e6e6e6" /><rect x="46.500" y="962.500" width="11" height="11" stroke="#e6e6e6" />
        <g fill="#e0e0e0" fontFamily="'DejaVu Sans', sans-serif" fontWeight="200" fontSize="21"><text x="54" y="902">Y</text><text x="118" y="967">X</text></g>
      </g>
    </svg>
  );
}

function ViewCube() {
  return (
    <div className="absolute top-[46px] right-[21px] flex w-[136px] flex-col items-center">
      <svg width="136" height="142" viewBox="0 0 136 142" aria-label="View cube" role="img">
        <circle cx="68" cy="71" r="57.500" stroke="#434a53" strokeWidth="13" fill="none" />
        <path d="M40.500 43.500h55v55h-55z" fill="#a9adb0" stroke="#7b8085" /><path d="M51 54h34v34H51z" fill="#9ea2ad" />
        <g fontFamily="'Liberation Sans', sans-serif" textAnchor="middle" fill="#b0b0b0" fontSize="22" fontWeight="700">
          <text x="68" y="19">N</text><text x="68" y="140">S</text><text x="11" y="79">W</text><text x="128" y="79">E</text>
          <text x="68" y="76" fontSize="13" fill="#4b5260">TOP</text>
        </g>
      </svg>
      <button className="mt-[23px] flex h-5 w-[57px] items-center justify-center gap-1 rounded-md bg-[#9297a5] text-xs leading-4 text-[#565c69]">
        WCS <Svg w={10} h={6}><path d="M0 0h10L5 6z" fill="#b8bcc6" stroke="#6f7583" /></Svg>
      </button>
    </div>
  );
}

function NavBar() {
  const s = "#41464f";
  const f = "#535961";
  return (
    <div className="absolute top-[262px] right-[3px] flex w-[41px] flex-col items-center rounded border-2 border-[#6b7074] bg-[#5b5f62] pb-[2px] shadow-[0_0_2px_#000]">
      <button aria-label="Close navigation bar" className="self-end"><Svg w={12} h={12}><circle cx="6" cy="6" r="4.500" fill={s} /><path d="M4 4l4 4M8 4l-4 4" stroke="#777" /></Svg></button>
      <IconButton name="Steering wheel" cls="h-10"><Svg w={28} h={28}><path d="M14 1h12v13a12 12 0 1 1-12-13z" stroke={s} strokeWidth="2" fill={f} /><circle cx="14" cy="13" r="7" stroke={s} strokeWidth="2" fill="#5b5f62" /><path d="M7 20l3-3M21 20l-3-3" stroke={s} strokeWidth="2" /></Svg></IconButton>
      <Caret color={s} />
      <span className="my-1 h-px w-full bg-[#666b6f]" />
      <IconButton name="Pan" cls="h-8"><Svg w={28} h={28}><path d="M9 24L1 14l2-2 5 4L6 4l3-1 3 9V2h3v10l3-9 3 1-2 9 5-7 2 1-5 13-2 5c-1 2-9 2-12 0z" fill={f} stroke={s} strokeWidth="1.500" /></Svg></IconButton>
      <IconButton name="Zoom extents" cls="h-9"><Svg w={30} h={28}><path d="M2 2l17 16M20 2L2 18M1 6V1h5M15 1h5v5M1 13v5h5" stroke={s} strokeWidth="2" /><circle cx="20" cy="18" r="6" stroke={s} strokeWidth="2" fill={f} /><path d="M25 22l5 5" stroke={s} strokeWidth="3" /></Svg></IconButton>
      <span className="flex h-3 items-center"><Caret color={s} /></span>
      <IconButton name="Orbit" cls="h-9"><Svg w={28} h={28}><path d="M12 27V7H9l5-6 5 6h-3v20z" fill={f} stroke={s} strokeWidth="1.500" /><path d="M11 12C-3 14-2 19 12 20M17 12c14 2 12 8 0 8" stroke={s} strokeWidth="2" /><path d="M4 20l6-4v8z" fill={s} /></Svg></IconButton>
      <span className="flex h-3 items-center"><Caret color={s} /></span>
      <span className="my-1 h-px w-full bg-[#666b6f]" />
      <IconButton name="ShowMotion" cls="h-8"><Svg w={28} h={28}><path d="M1 1h7v7H1zM11 1h7v7h-7zM21 1h6v7h-6zM1 12h19v15H1z" stroke={s} strokeWidth="2" fill={f} /><path d="M7 15l8 5-8 4z" fill={s} /></Svg></IconButton>
      <button aria-label="Customize navigation bar" className="mt-2 self-end"><Svg w={12} h={12}><circle cx="6" cy="6" r="4.500" stroke={s} strokeWidth="2" /><path d="M4 6h4" stroke={s} /></Svg></button>
    </div>
  );
}

function CommandLine() {
  return (
    <div className="absolute right-[397px] bottom-0 left-[396px]">
      <div className="mb-1 ml-[79px] flex flex-col items-start gap-[6px] font-['DejaVu_Sans_Mono',monospace] text-[15px] leading-[19px]">
        <span className="rounded-sm bg-[#565656] px-[2px] text-[#b8b8b8]">** LENGTHEN **</span>
        <span className="rounded-sm bg-[#606060] px-[2px] text-gray-100">Specify end point:6</span>
      </div>
      <div className="flex h-8 items-center rounded-l bg-[#2d3441]">
        <span className="ml-[5px]"><Svg w={6} h={22}><path d="M1 0v22M5 0v22" stroke={L} strokeWidth="2" strokeDasharray="2 2" /></Svg></span>
        <IconButton name="Close command line" cls="ml-2"><Svg w={12} h={12}><path d="M1 1l10 10M11 1L1 11" stroke={L} strokeWidth="2.500" /></Svg></IconButton>
        <IconButton name="Customize" cls="mr-[6px] ml-[14px]"><Svg><path d="M1 17L12 7c-1-4 2-7 6-6l-3 3 1 2 2 1 2-3c1 4-2 7-6 6L4 20z" fill={L} /></Svg></IconButton>
        <div className="flex h-8 flex-1 items-center rounded-r bg-white px-[5px]">
          <Svg w={20} h={16}><path d="M.5.5h19v15H.5z" fill="#f2f2f2" stroke="#777" /><path d="M0 0h20v4H0z" fill="#666" /><path d="M3 7l3 2-3 2M7 12h5" stroke="#555" /></Svg>
          <span className="pl-[2px]"><Caret big color="#555" /></span>
          <input aria-label="Command" className="min-w-0 flex-1 bg-transparent px-2 text-sm text-gray-900 outline-none" />
          <Svg w={10} h={6}><path d="M0 6h10L5 0z" fill="#666" /></Svg>
        </div>
      </div>
    </div>
  );
}

function Workspace() {
  return (
    <div className="flex min-h-0 flex-1 border-t-[5px] border-b-[5px] border-[#3b4453]">
      <aside className="flex w-[31px] flex-col bg-[#3b4453] py-[3px]" aria-label="Properties palette">
        <div className="flex flex-1 flex-col bg-[#222933] pt-[3px] pr-[3px] pb-[3px] pl-px">
          <div className="flex flex-1 flex-col items-center bg-[#3b4453]">
            <span className="pt-1"><Svg w={10} h={4}><path d="M0 1h10M0 3h10" stroke={L} strokeDasharray="1 1" /></Svg></span>
            <span className="flex flex-1 rotate-180 items-center justify-center text-sm leading-5 [writing-mode:vertical-rl]">Properties</span>
          </div>
        </div>
      </aside>
      <main className="relative min-w-0 flex-1 overflow-hidden bg-[#212830]">
        <ModelSpace />
        <ReferencePart />
        <button className="absolute top-[6px] left-[3px] text-sm leading-5 text-gray-100">[−][Top][2D Wireframe]</button>
        <div className="absolute top-[11px] right-[12px] flex items-end gap-3">
          <IconButton name="Minimize drawing"><Svg w={13} h={13}><path d="M0 11h13" stroke="#fff" strokeWidth="4" /></Svg></IconButton>
          <IconButton name="Restore drawing"><Svg w={13} h={13}><path d="M1.500 5h7v7h-7z" stroke="#fff" strokeWidth="3" /><path d="M4 1h8v8" stroke="#fff" strokeWidth="2" /></Svg></IconButton>
          <IconButton name="Close drawing"><Svg w={12} h={13}><path d="M1 2l10 10M11 2L1 12" stroke="#fff" strokeWidth="3" /></Svg></IconButton>
        </div>
        <ViewCube />
        <NavBar />
        <div className="absolute bottom-[5px] left-[1523px] text-[#868a8e]">
          <p className="text-2xl leading-8">Activate Windows</p>
          <p className="text-[17px] leading-7">Go to Settings to activate Windows.</p>
        </div>
        <CommandLine />
      </main>
    </div>
  );
}

/* ---------- status bar ---------- */

const W = "#f0f0f0";
function Cell({ name, on, cls = "w-[30px]", children }: { name: string; on?: boolean; cls?: string; children: ReactNode }) {
  return (
    <button aria-label={name} aria-pressed={on} className={`flex h-[30px] items-center justify-center ${cls} ${on ? "border border-[#3b4453] bg-[#6490c4]" : ""}`}>{children}</button>
  );
}
const Grp = ({ children }: { children: ReactNode }) => <div className="flex bg-[#3b4453]">{children}</div>;
const Pair = ({ children }: { children: ReactNode }) => <div className="flex gap-px">{children}</div>;
const Man = ({ extra }: { extra?: ReactNode }) => (
  <Svg w={22} h={22}><path d="M10 1l3 7v4l6 7-6-2-3-3-3 3-6 2 6-7V8z" fill={W} />{extra}</Svg>
);

function StatusBar() {
  return (
    <footer className="flex h-9 items-start justify-between bg-[#222933] text-sm text-gray-100">
      <nav className="flex h-[30px] items-center gap-[11px] pl-5" aria-label="Layouts">
        <button aria-label="Layout list"><MenuIcon /></button>
        <button className="h-[30px] w-[86px] bg-[#3b4453] font-bold [clip-path:polygon(12px_0,100%_0,74px_100%,0_100%)]">Model</button>
        <button className="-ml-[2px]">Layout1</button>
        <Slash />
        <button>Layout2</button>
        <Slash />
        <button aria-label="New layout"><PlusIcon /></button>
        <Slash />
      </nav>
      <div className="flex gap-[3px] pt-[2px] pr-[2px]">
        <Grp><Cell name="Model space" cls="w-[59px]">MODEL</Cell></Grp>
        <Grp>
          <Cell name="Grid" on><Svg><path d="M5 0v20M10 0v20M15 0v20M0 5h20M0 10h20M0 15h20" stroke="#fff" /></Svg></Cell>
          <Cell name="Snap"><Svg w={16} h={16}><path d="M1 2h14M1 8h14M1 14h14" stroke={L} strokeWidth="3" strokeDasharray="3 3" /></Svg></Cell>
          <Cell name="Snap options" cls="w-5"><Caret big /></Cell>
        </Grp>
        <Pair>
          <Grp>
            <Cell name="Ortho" on><Svg><path d="M1 0v19h19M1 13h6v6" stroke="#fff" /></Svg></Cell>
            <Cell name="Polar tracking"><Svg><circle cx="8" cy="11" r="7.500" stroke={L} /><path d="M8 11h12M8 11l7-8" stroke={L} /></Svg></Cell>
            <Cell name="Polar options" cls="w-5"><Caret big /></Cell>
            <Cell name="Isometric drafting"><Svg><path d="M1 2l16 16" stroke="#c75b62" /><path d="M9 1v18" stroke="#5fd98c" strokeWidth="1.500" /><path d="M7 8h4v4H7z" fill="#3b4453" stroke={L} /></Svg></Cell>
            <Cell name="Isometric options" cls="w-5"><Caret big /></Cell>
          </Grp>
          <Grp>
            <Cell name="Object snap tracking" on><Svg><path d="M0 17h20M1 16L15 2" stroke="#fff" /><circle cx="7" cy="10" r="2.500" fill="#fff" /></Svg></Cell>
            <Cell name="Object snap" on><Svg><path d="M6 3h13v16H2V7" stroke="#fff" /><path d="M1 1h5v5H1z" stroke="#fff" /></Svg></Cell>
            <Cell name="Object snap options" cls="w-5"><Caret big /></Cell>
          </Grp>
        </Pair>
        <Grp>
          <Cell name="Annotation visibility" on><Man extra={<circle cx="17" cy="5" r="3" stroke="#fff" />} /></Cell>
          <Cell name="Auto scale"><Man extra={<path d="M18 0l-4 6h3l-2 4 5-6h-3z" fill={W} />} /></Cell>
          <Cell name="Annotation scale"><Man /></Cell>
          <Cell name="Scale list" cls="w-[42px] gap-1">1:1<Caret big /></Cell>
        </Grp>
        <Pair>
          <Grp>
            <Cell name="Workspace"><Svg><circle cx="10" cy="10" r="5.500" stroke={L} strokeWidth="4" /><path d="M10 0v4M10 16v4M0 10h4M16 10h4M3 3l3 3M14 14l3 3M3 17l3-3M14 6l3-3" stroke={L} strokeWidth="3" /></Svg></Cell>
            <Cell name="Workspace options" cls="w-5"><Caret big /></Cell>
          </Grp>
          <Grp><Cell name="Annotation monitor"><PlusIcon /></Cell></Grp>
        </Pair>
        <Grp><Cell name="Isolate objects"><Svg><path d="M1 1h7v7H1zM8 12l5 7H3z" stroke={L} /><circle cx="15" cy="9" r="4" stroke={L} /></Svg></Cell></Grp>
        <Grp><Cell name="Graphics performance" cls="w-[34px]"><Svg w={26} h={26}><path d="M3 4l4-3h12l3 4v9l-5 6-6-3-8-3z" fill="#2f6fb4" /><path d="M1 15h10v8H1z" fill="#f5b623" /><path d="M0 7h12M6 1v13" stroke="#fff" strokeWidth="2" /><path d="M11 17l5 6 8-9" stroke="#4caf6a" strokeWidth="4" /></Svg></Cell></Grp>
        <Grp><Cell name="Clean screen"><Svg><path d="M.5 3h19v14H.5z" stroke={L} /><path d="M12 10l3-3M8 10l-3 3" stroke={L} /><path d="M12 5h5v5zM3 11v5h5z" fill={L} /></Svg></Cell></Grp>
        <Grp><Cell name="Customization"><Svg><path d="M0 2h20M0 10h20M0 18h20" stroke={L} strokeWidth="2" /></Svg></Cell></Grp>
      </div>
    </footer>
  );
}

/* ---------- desktop taskbar ---------- */

function Task({ name, active, children }: { name: string; active?: boolean; children: ReactNode }) {
  return (
    <button aria-label={name} className={`flex h-full items-center justify-center border-b-[3px] border-[#7fd6d8] ${active ? "w-[61px] bg-[#6e6e6e]" : "w-[51px]"}`}>{children}</button>
  );
}

function Taskbar() {
  return (
    <footer className="flex h-[50px] items-center bg-[#464646] text-white">
      <IconButton name="Start menu" cls="w-[60px]"><Svg><path d="M0 3l8-1v7H0zM9 2l11-2v9H9zM0 10h8v8l-8-1zM9 10h11v10L9 18z" fill="#fff" /></Svg></IconButton>
      <IconButton name="Search" cls="w-[60px]"><Svg w={28} h={28}><circle cx="17" cy="11" r="10" stroke="#fff" strokeWidth="2.500" /><path d="M10 18L1 27" stroke="#fff" strokeWidth="3" /></Svg></IconButton>
      <IconButton name="Task view" cls="w-[60px]"><Svg><path d="M1 5h12v10H1zM1 0v2h12V0M1 20v-2h12v2M18 0v3M18 12v8" stroke="#fff" strokeWidth="1.500" /><path d="M16 6h4v4h-4z" fill="#fff" /></Svg></IconButton>
      <div className="h-full pr-[11px] pl-[9px]">
        <Task name="Chrome">
          <Svg w={32} h={32}>
            <circle cx="15" cy="15" r="15" fill="#fbc116" /><path d="M15 15L2 8a15 15 0 0 1 26 0H15z" fill="#ea4335" /><path d="M15 15l-2 15A15 15 0 0 1 2 7z" fill="#34a853" />
            <circle cx="15" cy="15" r="7" fill="#fff" /><circle cx="15" cy="15" r="5.500" fill="#4285f4" /><circle cx="23" cy="22" r="9" fill="#8fb8c8" /><path d="M23 13a9 9 0 0 1 3 17l-2-8z" fill="#c4b7f0" /><path d="M22 15l3 4v12h-5V18z" fill="#54717e" />
          </Svg>
        </Task>
      </div>
      <div className="flex h-full gap-[6px]">
        <Task name="File Explorer"><Svg w={28} h={26}><path d="M0 1h12l2 3h14v20H0z" fill="#e8a818" /><path d="M0 6h28v17H0z" fill="#ffd665" /><path d="M5 24v-9q0-2 2-2h14q2 0 2 2v9h-5v-5h-8v5z" fill="#3d9be0" /></Svg></Task>
        <Task name="AutoCAD" active>
          <Svg w={28} h={30}><path d="M0 1h28v29H4l-4-4z" fill="#8c0a32" /><path d="M4 0h22v20H4z" fill="#e51050" /><path d="M0 2l4-2v20l-4 5z" fill="#ff5c7a" /><path d="M4 21h22v8H4z" fill="#7a0828" /><path d="M13 4h4l4 12h-3l-1-3h-4l-1 3h-3zm2 3l-1 4h2z" fill="#fff" /><text x="15" y="28" textAnchor="middle" fontFamily="'Open Sans', sans-serif" fontSize="7" fontWeight="700" fill="#fff">CAD</text></Svg>
        </Task>
        <Task name="Capture tool">
          <Svg w={26} h={30}><circle cx="8" cy="5" r="5" fill="#fff" /><circle cx="18" cy="5" r="5" fill="#fff" /><circle cx="10" cy="5" r="2" fill="#222" /><circle cx="16" cy="5" r="2" fill="#222" /><path d="M3 26h9v4H1zM14 26h9l2 4H14z" fill="#f5b623" /><ellipse cx="13" cy="17" rx="11" ry="11" fill="#1583e9" /><circle cx="2" cy="17" r="2" fill="#fff" /><circle cx="24" cy="17" r="2" fill="#fff" /><path d="M9 11v10h10M6 14h10v10" stroke="#fff" strokeWidth="1.500" /></Svg>
        </Task>
      </div>
      <span className="flex-1" />
      <IconButton name="Help center"><Svg w={30} h={28}><circle cx="13" cy="14" r="12" fill="#0c94dc" stroke="#fff" strokeWidth="2" /><path d="M9 11c0-6 9-5 8 0 0 3-4 3-4 6" stroke="#fff" strokeWidth="3" /><circle cx="13" cy="21" r="2" fill="#fff" /><circle cx="23" cy="20" r="6" fill="#f5ab1e" /><path d="M23 18v6" stroke="#fff" strokeWidth="2" /></Svg></IconButton>
      <IconButton name="News" cls="ml-[208px]"><Svg w={30} h={20}><path d="M1 1h24v18H3q-2 0-2-2zM25 5h4v12q0 2-4 2" stroke="#fff" strokeWidth="2" /><path d="M4 5h18M14 9h8M14 12h8M14 15h8" stroke="#fff" strokeWidth="1.500" /><path d="M5 9h6v6H5z" stroke="#fff" strokeWidth="1.500" /></Svg></IconButton>
      <div className="ml-8 flex items-center gap-3">
        <IconButton name="Hidden icons"><Svg w={16} h={9}><path d="M0 8l8-7 8 7" stroke="#fff" strokeWidth="1.500" /></Svg></IconButton>
        <IconButton name="Battery"><Svg w={20} h={16}><path d="M4 4h14v10H4z" fill="#fff" stroke="#fff" /><path d="M19 7v4" stroke="#fff" strokeWidth="2" /><path d="M0 3h6v3q-3 2-6 0zM1 0v3M5 0v3M3 6v4" stroke="#fff" fill="#464646" /></Svg></IconButton>
        <IconButton name="Network"><Svg w={17} h={17}><path d="M1 16C1 8 8 1 16 1M5 16C5 10 10 5 16 5M9 16c0-4 3-7 7-7" stroke="#d0d0d0" strokeWidth="1.500" /><circle cx="14" cy="14" r="2" fill="#fff" /></Svg></IconButton>
        <IconButton name="Volume"><Svg w={20} h={18}><path d="M1 6h3l5-4v14l-5-4H1z" stroke="#fff" /><path d="M12 6q2 3 0 6" stroke="#fff" /><path d="M14 4q4 5 0 10M17 2q5 7 0 14" stroke="#999" /></Svg></IconButton>
      </div>
      <button aria-label="Input mode" className="ml-[10px] text-2xl leading-6">A</button>
      <button aria-label="Language" className="ml-[18px] flex h-5 w-5 items-center justify-center bg-white text-base leading-5 font-bold text-[#222]">한</button>
      <p className="w-[118px] text-center text-sm leading-[23px]">오후 9:27<br />2023-10-25</p>
      <button aria-label="Notifications" className="flex w-[47px] pl-[2px]"><Svg w={32} h={32}><path d="M0 3h20v16h-9l-5 5v-5H0z" fill="#fff" /><path d="M4 8h12M4 12h12M4 16h8" stroke="#464646" strokeWidth="1.500" /><circle cx="20" cy="22" r="9.500" fill="#333" stroke="#aaa" /><text x="20" y="27" textAnchor="middle" fontSize="14" fill="#fff">1</text></Svg></button>
      <span className="mr-[5px] h-full w-px bg-[#8a8a8a]" />
    </footer>
  );
}

export default function App() {
  return (
    <div className="flex h-screen flex-col bg-[#222933] font-['Noto_Sans','Noto_Sans_CJK_KR',sans-serif] text-gray-100">
      <TitleBar />
      <RibbonTabs />
      <Ribbon />
      <FileTabs />
      <Workspace />
      <StatusBar />
      <Taskbar />
    </div>
  );
}
